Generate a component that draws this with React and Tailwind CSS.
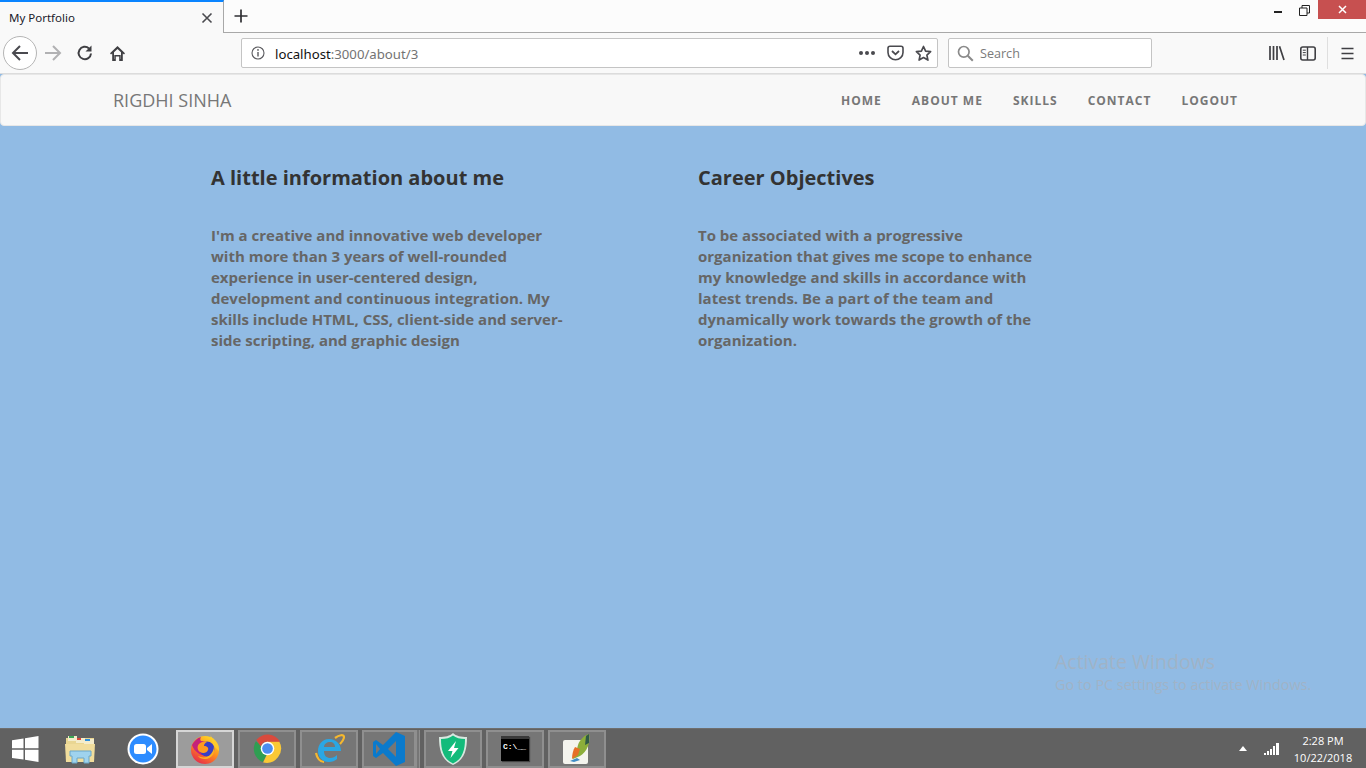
import React from "react";

const Ic = ({ w = 16, h = 16, vb = "0 0 16 16", children, className = "" }) => (
  <svg width={w} height={h} viewBox={vb} fill="none" className={"block shrink-0 " + className}>{children}</svg>
);

const TaskBtn = ({ active, children, className = "w-[58px]" }) => (
  <div className={"h-[38px] flex items-center justify-center border-2 shrink-0 " + className + " " + (active ? "bg-[#9c9c9c] border-[#d6d6d6]" : "bg-[#767676] border-[#8f8f8f]")}>
    {children}
  </div>
);

export default function App() {
  return (
    <div className="w-[1366px] h-[768px] overflow-hidden flex flex-col relative bg-[#91bbe4] font-['Open_Sans',sans-serif]">
      {/* Tab strip */}
      <div className="h-[33px] flex bg-[#fcfcfc] shrink-0">
        <div className="w-[224px] h-[33px] bg-[#f9f9f9] border-t-2 border-[#0a84ff] border-r border-r-[#a8a8a8] flex items-center pl-[9px] pr-[10px] justify-between">
          <span className="text-[11.5px] text-[#1a1a2a] font-['Noto_Sans',sans-serif]">My Portfolio</span>
          <Ic w={12} h={12} vb="0 0 12 12"><path d="M1.500 1.500l9 9M10.500 1.500l-9 9" stroke="#4a4a4f" strokeWidth="1.6" /></Ic>
        </div>
        <div className="flex-1 border-b border-[#a8a8a8] flex items-center pl-[10px]">
          <Ic w={14} h={14} vb="0 0 14 14" className="-mt-px"><path d="M7 0.500v13M0.500 7h13" stroke="#2f2f33" strokeWidth="1.7" /></Ic>
          <div className="ml-auto flex items-start h-full -mt-px">
            <div className="w-[26px] flex justify-center pt-[11px]"><div className="w-[8px] h-[2px] bg-[#222]" /></div>
            <div className="w-[26px] flex justify-center pt-[5px] mr-px">
              <Ic w={11} h={11} vb="0 0 11 11"><path d="M0.500 3h7.500v7.500h-7.500zM3 3V0.500h7.500V8H8" stroke="#222" strokeWidth="1" /></Ic>
            </div>
            <div className="w-[48px] h-[19px] bg-[#c75050] flex justify-center items-center">
              <Ic w={9} h={9} vb="0 0 9 9"><path d="M1 1l7 7M8 1l-7 7" stroke="#fff" strokeWidth="1.5" /></Ic>
            </div>
          </div>
        </div>
      </div>

      {/* Toolbar */}
      <div className="h-[41px] bg-[#f9f9f9] flex items-center shrink-0 border-b border-[#dcdcdc] relative">
        <div className="w-[34px] h-[34px] ml-[3px] rounded-full border border-[#b5b5b5] bg-white flex items-center justify-center shrink-0">
          <Ic w={18} h={18} vb="0 0 18 18"><path d="M17 9H2M9 2L2 9l7 7" stroke="#4a4a4f" strokeWidth="2" /></Ic>
        </div>
        <div className="ml-[7px]">
          <Ic w={18} h={18} vb="0 0 18 18"><path d="M1 9h15M9 2l7 7-7 7" stroke="#b1b1b3" strokeWidth="2" /></Ic>
        </div>
        <div className="ml-[14px]">
          <Ic w={18} h={18} vb="0 0 18 18"><path d="M15 9.500A6.200 6.200 0 1 1 13 4.400" stroke="#3f3f43" strokeWidth="2" /><path d="M15.500 1.500v6h-6z" fill="#3f3f43" /></Ic>
        </div>
        <div className="ml-[15px]">
          <Ic w={17} h={17} vb="0 0 17 17"><path d="M8.500 1L1 8.200l1 1.200 1.200-1V16h3.600v-4.500h3.400V16h3.600V8.400l1.200 1 1-1.200z" fill="#3f3f43" /><path d="M8.500 4L5 7.300V14h.3V10h6.400v4h.3V7.300z" fill="#f9f9f9" /></Ic>
        </div>

        <div className="ml-[115px] w-[697px] h-[30px] bg-white border border-[#c4c4c4] rounded-[2px] flex items-center shrink-0">
          <div className="ml-[9px]">
            <Ic w={14} h={14} vb="0 0 14 14"><circle cx="7" cy="7" r="6" stroke="#5a5a5e" strokeWidth="1.1" /><path d="M7 6v4.500" stroke="#5a5a5e" strokeWidth="1.4" /><circle cx="7" cy="3.900" r="0.9" fill="#5a5a5e" /></Ic>
          </div>
          <span className="ml-[10px] pt-[3px] text-[13.2px] leading-none font-['Noto_Sans',sans-serif] text-[#111]">localhost<span className="text-[#737373]">:3000/about/3</span></span>
          <div className="ml-auto flex items-center mr-[5px]">
            <div className="flex gap-[2px]">
              <span className="w-[4px] h-[4px] rounded-full bg-[#4a4a4f]" />
              <span className="w-[4px] h-[4px] rounded-full bg-[#4a4a4f]" />
              <span className="w-[4px] h-[4px] rounded-full bg-[#4a4a4f]" />
            </div>
            <div className="ml-[12px]">
              <Ic w={17} h={16} vb="0 0 17 16"><path d="M1 3.200C1 2 1.800 1.200 3 1.200h11c1.200 0 2 .8 2 2v4.300c0 4-3.500 7.200-7.500 7.200S1 11.500 1 7.500z" stroke="#4a4a4f" strokeWidth="1.6" /><path d="M5 6l3.500 3.300L12 6" stroke="#4a4a4f" strokeWidth="1.8" /></Ic>
            </div>
            <div className="ml-[11px]">
              <Ic w={17} h={17} vb="0 0 17 17"><path d="M8.500 1.500l2.100 4.600 5 .6-3.700 3.400 1 5-4.400-2.500-4.400 2.500 1-5L1.400 6.700l5-.6z" stroke="#4a4a4f" strokeWidth="1.7" strokeLinejoin="round" /></Ic>
            </div>
          </div>
        </div>

        <div className="ml-[10px] w-[204px] h-[30px] bg-white border border-[#c4c4c4] rounded-[2px] flex items-center shrink-0">
          <div className="ml-[8px]">
            <Ic w={17} h={17} vb="0 0 17 17"><circle cx="6.800" cy="6.800" r="5.300" stroke="#8a8a8a" strokeWidth="1.7" /><path d="M10.800 10.800l5 5" stroke="#8a8a8a" strokeWidth="2" /></Ic>
          </div>
          <span className="ml-[6px] pt-[3px] text-[12.6px] leading-none font-['Open_Sans',sans-serif] text-[#7a7a7a]">Search</span>
        </div>

        <div className="ml-[117px]">
          <Ic w={16} h={16} vb="0 0 16 16"><path d="M1 1v14M4.500 1v14M8 1v14M10.500 1.200L15 15" stroke="#3f3f43" strokeWidth="1.7" /></Ic>
        </div>
        <div className="ml-[15px]">
          <Ic w={16} h={15} vb="0 0 16 15"><rect x="0.800" y="1" width="14.400" height="13" rx="2" stroke="#3f3f43" strokeWidth="1.6" /><path d="M7.500 1v13" stroke="#3f3f43" strokeWidth="1.4" /><path d="M2.800 4.200h3M2.800 6.600h3M2.800 9h3" stroke="#3f3f43" strokeWidth="1" /></Ic>
        </div>
        <div className="ml-[11px] w-px h-[32px] bg-[#dfdfdf]" />
        <div className="ml-[13px]">
          <Ic w={13} h={13} vb="0 0 13 13"><path d="M0.500 1.500h12M0.500 6.500h12M0.500 11.500h12" stroke="#3f3f43" strokeWidth="1.6" /></Ic>
        </div>
      </div>

      {/* Navbar */}
      <nav className="h-[52px] bg-[#f8f8f8] border border-[#e7e7e7] rounded-[4px] flex items-center shrink-0">
        <span className="ml-[112px] text-[18px] text-[#777777] leading-none">RIGDHI SINHA</span>
        <div className="ml-auto mr-[127px] pt-[2px] flex gap-[30px] text-[12px] font-bold tracking-[1px] text-[#777777] leading-none">
          <span>HOME</span>
          <span>ABOUT ME</span>
          <span>SKILLS</span>
          <span>CONTACT</span>
          <span>LOGOUT</span>
        </div>
      </nav>

      {/* Main */}
      <main className="flex-1 flex pl-[211px] pt-[37px]">
        <section className="w-[487px] shrink-0">
          <h3 className="text-[20px] leading-[30px] font-bold text-[#333333]">A little information about me</h3>
          <p className="mt-[32px] w-[360px] text-[15px] leading-[21px] font-bold text-[#666666]">
            I'm a creative and innovative web developer with more than 3 years of well-rounded experience in user-centered design, development and continuous integration. My skills include HTML, CSS, client-side and server-side scripting, and graphic design
          </p>
        </section>
        <section className="w-[360px] shrink-0">
          <h3 className="text-[20px] leading-[30px] font-bold text-[#333333]">Career Objectives</h3>
          <p className="mt-[32px] w-[340px] text-[15px] leading-[21px] font-bold text-[#666666]">
            To be associated with a progressive organization that gives me scope to enhance my knowledge and skills in accordance with latest trends. Be a part of the team and dynamically work towards the growth of the organization.
          </p>
        </section>
      </main>

      {/* Watermark */}
      <div className="absolute left-[1055px] top-[649px] text-[#a0b3c7] font-['Open_Sans',sans-serif] pointer-events-none whitespace-nowrap">
        <div className="text-[19.5px] leading-[26px]">Activate Windows</div>
        <div className="text-[14.4px] leading-[18px] mt-[1px]">Go to PC settings to activate Windows.</div>
      </div>

      {/* Taskbar */}
      <footer className="h-[40px] bg-[#616161] border-t border-[#6e6e6e] flex items-center shrink-0">
        <div className="ml-[12px] w-[27px]">
          <Ic w={27} h={26} vb="0 0 27 26"><path d="M0 4.200l11.500-1.700v9.800H0zM13 2.300L26.500 0v12.300H13zM0 13.800h11.500v9.800L0 21.900zM13 13.800h13.500V26L13 23.800z" fill="#fff" /></Ic>
        </div>
        <div className="ml-[25px] w-[34px]">
          <Ic w={33} h={30} vb="0 0 33 30">
            <path d="M2 4h28v22H2z" fill="#e9d692" />
            <path d="M4 2h9v5H4z" fill="#f4eccb" /><path d="M5 2h5v2H5z" fill="#3aa655" />
            <path d="M12 4h9v5h-9z" fill="#f4eccb" /><path d="M13 4h4v2h-4z" fill="#d8483a" />
            <path d="M20 5h10v5H20z" fill="#f4eccb" /><path d="M21 5h5v2h-5z" fill="#2f8fdc" />
            <path d="M1 10h30l-1 18H2z" fill="#f1dd9c" />
            <path d="M6 17h21v5h-2v7h-5v-5h-7v5H8v-7H6z" fill="#9fd3ee" stroke="#6ba7c9" />
          </Ic>
        </div>
        <div className="ml-[29px] w-[32px]">
          <Ic w={32} h={32} vb="0 0 32 32">
            <circle cx="16" cy="16" r="15.500" fill="#fff" /><circle cx="16" cy="16" r="13.500" fill="#2d8cff" />
            <rect x="7" y="11" width="12" height="10" rx="2.500" fill="#fff" /><path d="M20 15l5-4v10l-5-4z" fill="#fff" />
          </Ic>
        </div>
        <div className="ml-[17px] flex gap-[4px]">
          <TaskBtn active>
            <Ic w={30} h={31} vb="0 0 30 31">
              <defs>
                <linearGradient id="ffa" x1="0.8" y1="0" x2="0.2" y2="1"><stop offset="0" stopColor="#ffe226" /><stop offset="0.5" stopColor="#ff8a1e" /><stop offset="1" stopColor="#e4244f" /></linearGradient>
              </defs>
              <circle cx="15" cy="17" r="14" fill="url(#ffa)" />
              <path d="M20 1c1 4 6 6 8 11 1 3 1 5 1 6l-6-6z" fill="#ffcb2b" />
              <path d="M2 12c2-4 5-7 9-8-1 2-1 3 0 4 3 0 6 1 7 3-2 1-3 2-3 3 4 1 5 4 3 7-2 2-7 2-10-1-3-2-5-5-6-8z" fill="#c4227a" />
              <circle cx="17" cy="16" r="7.500" fill="#3a3fc4" />
              <path d="M9 11c2-2 5-3 8-2-2 1-3 2-3 4 3 0 5 2 4 4-1 3-5 4-8 2-3-2-3-6-1-8z" fill="#ff9a1f" />
              <path d="M24 13c2 6-2 13-9 13-3 0-6-1-7-3 4 2 9 2 12-1 2-2 4-5 4-9z" fill="#ffb21f" />
            </Ic>
          </TaskBtn>
          <TaskBtn>
            <Ic w={31} h={31} vb="0 0 32 32">
              <path d="M4 8.500A15 15 0 0 0 11 30l6-11z" fill="#2f9e52" />
              <path d="M28 8.500H15l3 8-6.500 14A15 15 0 0 0 28 8.500z" fill="#fbc936" />
              <path d="M4.500 7A15 15 0 0 1 29 9H16a7 7 0 0 0-7 5z" fill="#d94a3d" />
              <circle cx="16" cy="16" r="7" fill="#fff" /><circle cx="16" cy="16" r="5.500" fill="#4b8df0" />
            </Ic>
          </TaskBtn>
          <TaskBtn>
            <Ic w={32} h={32} vb="0 0 32 32">
              <path d="M3 20c1 5 4 9 8 9M22 5c4-3 9-4 9-1 0 2-2 5-4 7" stroke="#f5b82e" strokeWidth="2.2" />
              <path d="M28 18H11c0 5 3 7 6 7 3 0 5-1 7-3v4c-2 2-5 3-8 3-7 0-11-5-11-11S9 6 16 6s12 5 12 12zM11 14h11c0-3-2-5-5-5-3 0-6 2-6 5z" fill="#2aa7e4" />
            </Ic>
          </TaskBtn>
          <div className="flex shrink-0">
            <TaskBtn className="w-[54px]">
              <Ic w={32} h={34} vb="0 0 32 34">
                <path d="M23 0l9 4v26l-9 4-13-13-7 5-3-2V10l3-2 7 5zM23 9l-8 8 8 8z" fill="#0a7acc" />
                <path d="M3 12v10l4-5z" fill="#767676" />
              </Ic>
            </TaskBtn>
            <div className="w-[4px] h-[38px] bg-[#767676] border-x border-[#8f8f8f]" />
          </div>
          <TaskBtn>
            <Ic w={30} h={34} vb="0 0 30 34">
              <path d="M15 1c3 3 8 4 14 4 0 12-2 23-14 28C3 28 1 17 1 5c6 0 11-1 14-4z" fill="#d8e8e0" />
              <path d="M15 3.500c3 2.500 7 3.500 12 3.500 0 10-2 20-12 24.500C5 27 3 17 3 7c5 0 9-1 12-3.500z" fill="#13bb7b" />
              <path d="M18 9l-8 10h4.500l-2 7 8-10h-4.500z" fill="#fff" />
            </Ic>
          </TaskBtn>
          <TaskBtn>
            <div className="w-[28px] h-[25px] bg-black border-t-[3px] border-[#3a3a3a] shadow-[1px_1px_1px_#444] flex flex-col">
              <span className="text-white font-['Liberation_Mono',monospace] text-[8px] leading-[9px] mt-[3px] ml-[2px] font-bold whitespace-pre">C:\<span className="tracking-[-1px]">__</span></span>
            </div>
          </TaskBtn>
          <TaskBtn>
            <Ic w={30} h={32} vb="0 0 30 32">
              <rect x="1" y="7" width="25" height="24" rx="2" fill="#f4f4ee" />
              <path d="M27 1c2 8-2 18-9 22l-7 3c0-3 1-5 3-6l2-8c2-6 7-10 11-11z" fill="#8cae3a" />
              <path d="M24 3l3-2v9l-4 2z" fill="#2f5a46" />
              <path d="M13 14l5 2-2 6-6 4c0-4 1-9 3-12z" fill="#e66f27" />
              <path d="M8 28l7-3 3 2-6 2z" fill="#3f8cc6" />
            </Ic>
          </TaskBtn>
        </div>
        <div className="ml-auto flex items-center">
          <Ic w={8} h={5} vb="0 0 8 5"><path d="M4 0l4 5H0z" fill="#fff" /></Ic>
          <div className="ml-[17px]">
            <Ic w={16} h={12} vb="0 0 16 12"><path d="M0 10h2v2H0zM3 8h2v4H3zM6 6h2v6H6zM9 3h2v9H9zM12 0h3v12h-3z" fill="#fff" /></Ic>
          </div>
          <div className="ml-[12px] mr-[12px] w-[62px] text-center text-white text-[11px] leading-[17px] font-['Open_Sans',sans-serif]">
            <div>2:28 PM</div>
            <div className="whitespace-nowrap">10/22/2018</div>
          </div>
        </div>
      </footer>
    </div>
  );
}
